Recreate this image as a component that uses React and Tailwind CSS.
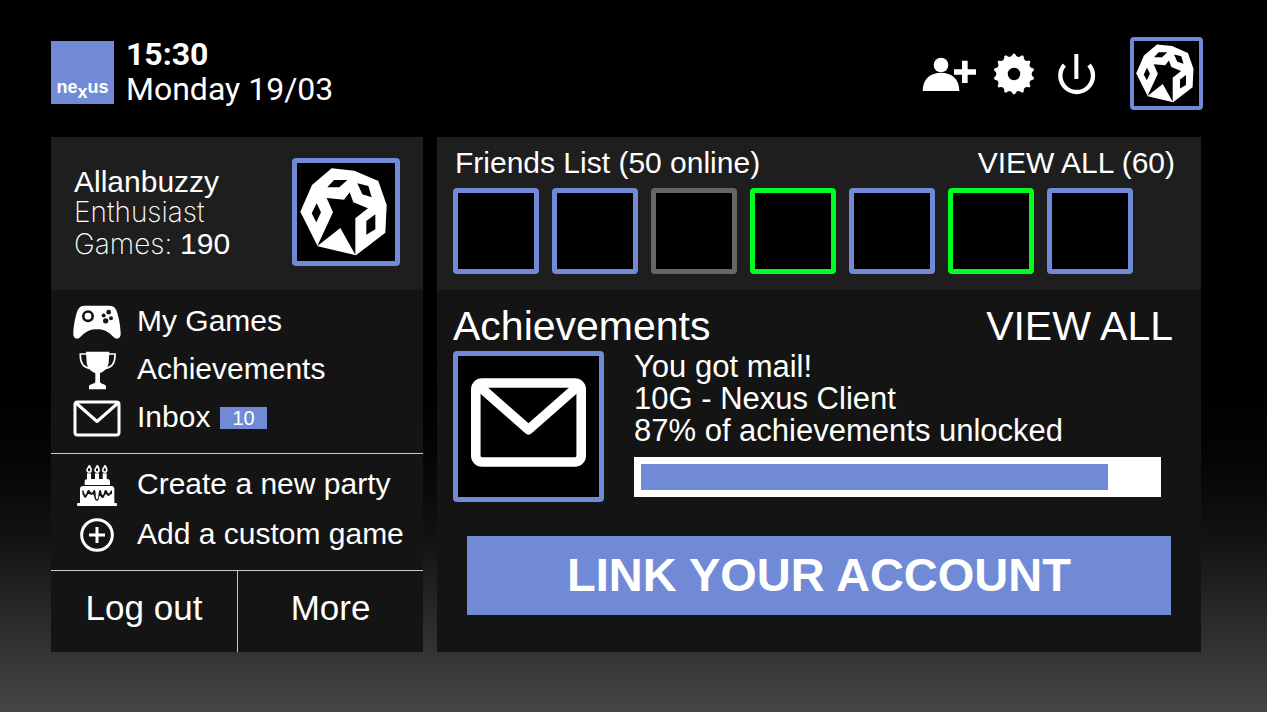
import clsx from "clsx";

const friends = [
  { id: 1, status: "online" },
  { id: 2, status: "online" },
  { id: 3, status: "offline" },
  { id: 4, status: "playing" },
  { id: 5, status: "online" },
  { id: 6, status: "playing" },
  { id: 7, status: "online" },
];

const statusBorder = {
  online: "border-[#718ad6]",
  offline: "border-[#666666]",
  playing: "border-[#00ff21]",
};

const GEAR_TEETH = 14;

function gearPath() {
  const point = (radius, step) => {
    const angle = (step * Math.PI) / GEAR_TEETH - Math.PI / 2;
    const x = 64 + radius * Math.cos(angle);
    const y = 64 + radius * Math.sin(angle);
    return `${x.toFixed(1)} ${y.toFixed(1)}`;
  };
  let d = `M${point(62, -0.2)}`;
  for (let i = 0; i < GEAR_TEETH; i++) {
    d += `L${point(62, i * 2 + 0.2)}Q${point(46, i * 2 + 1)} ${point(62, i * 2 + 1.8)}`;
  }
  return d + "Z";
}

function GemIcon() {
  return (
    <svg viewBox="33 39 294 294" className="block w-full h-full" aria-hidden="true">
      <path
        fill="#fff"
        d="M137 55L205 62L277 93L302 165L298 248L210 316L95 289L43 185L78 105Z"
      />
      <path d="M144 90H184L160 112H124Z" />
      <path d="M214 100L247 108L257 142L229 133Z" />
      <path d="M92 160L105 187L91 217L77 190Z" />
      <path d="M268 193V238L241 254V213Z" />
      <path d="M191 127L202 157L246 175L208 205V314L163 234L94 288L141 187L122 144L174 149Z" />
    </svg>
  );
}

function AddFriendIcon() {
  return (
    <svg viewBox="36 66 165 126" className="w-[55px] h-[42px]" fill="#fff" aria-hidden="true">
      <circle cx="93" cy="102" r="22" />
      <path d="M38 180C38 143 62 125 93 125S148 143 148 180Z" />
      <path d="M156 89H173V115H198V131H173V156H156V131H132V115H156Z" />
    </svg>
  );
}

function GearIcon() {
  return (
    <svg viewBox="0 0 128 128" className="w-[42px] h-[42px]" aria-hidden="true">
      <path fill="#fff" d={gearPath()} />
      <circle cx="64" cy="64" r="19" fill="#000" />
    </svg>
  );
}

function PowerIcon() {
  return (
    <svg viewBox="441 66 117 126" className="w-[39px] h-[42px]" fill="none" stroke="#fff" aria-hidden="true">
      <path strokeWidth="12" d="M499 69V144" />
      <path strokeWidth="13" d="M463 102A49 49 0 1 0 537 102" />
    </svg>
  );
}

function ControllerIcon() {
  return (
    <svg viewBox="40 29 144 104" className="w-12 h-[35px]" aria-hidden="true">
      <path
        fill="#fff"
        d="M76 31H148C159 31 166 35 170 44C177 62 182 88 183 112C184 126 177 131 169 129C158 126 150 101 112 101S66 126 55 129C47 131 40 126 41 112C42 88 47 62 54 44C58 35 65 31 76 31Z"
      />
      <circle cx="85" cy="62" r="14" fill="none" stroke="#141414" strokeWidth="8" />
      <g fill="#141414">
        <circle cx="147" cy="50" r="7" />
        <circle cx="132" cy="60" r="6" />
        <circle cx="154" cy="68" r="6" />
        <circle cx="138" cy="76" r="8" />
      </g>
    </svg>
  );
}

function TrophyIcon() {
  return (
    <svg viewBox="57 168 111 117" className="w-[37px] h-[39px]" aria-hidden="true">
      <path
        fill="#fff"
        d="M78 170H148L146 203C143 220 133 229 120 234V260C122 267 134 267 138 272V283H87V272C91 267 104 267 106 260V234C93 229 83 220 80 203Z"
      />
      <g fill="none" stroke="#fff" strokeWidth="5">
        <path d="M80 177H61C60 202 70 218 90 220" />
        <path d="M146 177H165C166 202 156 218 136 220" />
      </g>
    </svg>
  );
}

function MailIcon({ strokeWidth, className }) {
  return (
    <svg
      viewBox="0 0 48 37"
      className={className}
      fill="none"
      stroke="#fff"
      strokeWidth={strokeWidth}
      strokeLinejoin="round"
      aria-hidden="true"
    >
      <rect x="2" y="2" width="44" height="33" rx="2.6" />
      <path d="M3 3L24 21.5L45 3" />
    </svg>
  );
}

function CakeIcon() {
  return (
    <svg viewBox="51 26 120 126" className="w-10 h-[42px]" fill="#fff" aria-hidden="true">
      {[87, 111, 134].map((x) => (
        <g key={x}>
          <path
            fill="none"
            stroke="#fff"
            strokeWidth="5"
            d={`M${x + 1} 30C${x + 1} 37 ${x - 7} 38 ${x - 6} 45C${x - 5} 52 ${x + 6} 52 ${x + 6} 45C${x + 7} 40 ${x + 3} 36 ${x + 1} 30Z`}
          />
          <rect x={x - 6} y="54" width="12" height="17" />
        </g>
      ))}
      <path d="M82 71H142Q150 71 150 79V89H74V79Q74 71 82 71Z" />
      <path d="M70 92H154Q163 92 163 101V145H60V101Q60 92 70 92Z" />
      <path
        fill="#141414"
        d="M67 105C74 103 71 118 76 118S80 103 86 104S90 112 95 112S99 103 104 104C109 106 105 132 111 132S114 105 120 104S123 119 128 119S131 104 137 104S141 114 146 114S150 103 156 106V117C150 114 151 122 146 122S141 116 137 117S134 128 128 128S123 120 119 122S119 136 111 136S104 124 101 119S96 120 93 119S86 114 83 118S80 127 75 127S71 117 67 117Z"
      />
      <rect x="51" y="143" width="120" height="9" rx="3" />
    </svg>
  );
}

function PlusCircleIcon() {
  return (
    <svg viewBox="60 188 102 102" className="w-[34px] h-[34px]" fill="none" stroke="#fff" strokeWidth="9" aria-hidden="true">
      <circle cx="111" cy="239" r="46" />
      <path d="M87 239H135M111 215V263" />
    </svg>
  );
}

function MenuItem({ icon, label, badge }) {
  return (
    <li>
      <a href="#" className="flex items-center h-12 gap-4">
        <span className="w-12 shrink-0 flex justify-center">{icon}</span>
        <span className="pb-1">{label}</span>
        {badge && (
          <span className="-ml-1.5 px-3 bg-[#718ad6] text-xl leading-[22px]">{badge}</span>
        )}
      </a>
    </li>
  );
}

function Header() {
  return (
    <header className="flex items-start h-[73px]">
      <div className="mt-1 w-[63px] h-[63px] shrink-0 bg-[#718ad6] flex items-end justify-center text-lg leading-6 font-bold">
        <span>
          ne<span className="align-sub">x</span>us
        </span>
      </div>
      <div className="ml-3 font-['Roboto',sans-serif] text-[32px] leading-[35px]">
        <p className="font-bold">15:30</p>
        <p>Monday 19/03</p>
      </div>
      <nav className="ml-auto -mr-0.5 flex items-center">
        <button type="button" aria-label="Add friend">
          <AddFriendIcon />
        </button>
        <button type="button" aria-label="Settings" className="ml-4">
          <GearIcon />
        </button>
        <button type="button" aria-label="Power" className="ml-[22px]">
          <PowerIcon />
        </button>
        <button
          type="button"
          aria-label="Profile"
          className="ml-[34px] w-[73px] h-[73px] bg-black border-4 border-[#718ad6] rounded-sm"
        >
          <GemIcon />
        </button>
      </nav>
    </header>
  );
}

function Sidebar() {
  return (
    <aside className="w-[372px] shrink-0 flex flex-col bg-[#141414]">
      <div className="h-[153px] px-[23px] pt-[21px] flex items-start justify-between bg-[#1e1e1e] leading-[31px]">
        <div className="mt-2">
          <p>Allanbuzzy</p>
          <p className="font-['Inter',sans-serif] font-extralight text-[28px] leading-[31px]">Enthusiast</p>
          <p className="font-['Inter',sans-serif] font-extralight text-[28px] leading-[31px]">
            Games:{" "}
            <span className="font-['Liberation_Sans',Arial,sans-serif] font-normal text-[30px]">190</span>
          </p>
        </div>
        <div className="w-[108px] h-[108px] bg-black border-5 border-[#718ad6] rounded-sm">
          <GemIcon />
        </div>
      </div>
      <ul className="pl-[22px] pt-2 pb-[11px]">
        <MenuItem icon={<ControllerIcon />} label="My Games" />
        <MenuItem icon={<TrophyIcon />} label="Achievements" />
        <MenuItem icon={<MailIcon strokeWidth="3" className="w-12 h-[37px]" />} label="Inbox" badge="10" />
      </ul>
      <ul className="pl-[22px] pt-[7px] pb-[11px] border-t border-[#cccccc] flex flex-col gap-0.5">
        <MenuItem icon={<CakeIcon />} label="Create a new party" />
        <MenuItem icon={<PlusCircleIcon />} label="Add a custom game" />
      </ul>
      <div className="h-[82px] grid grid-cols-2 border-t border-[#cccccc] text-[35px]">
        <button type="button" className="pb-1.5">Log out</button>
        <button type="button" className="pb-1.5 border-l border-[#cccccc]">More</button>
      </div>
    </aside>
  );
}

function FriendsList() {
  return (
    <section className="h-[153px] pl-4 pr-[26px] pt-2 bg-[#1e1e1e]">
      <div className="pl-0.5 flex justify-between leading-9">
        <h2>Friends List (50 online)</h2>
        <a href="#">VIEW ALL (60)</a>
      </div>
      <ul className="mt-[7px] flex gap-[13px]">
        {friends.map((friend) => (
          <li
            key={friend.id}
            className={clsx("w-[86px] h-[86px] bg-black border-5 rounded-sm", statusBorder[friend.status])}
          />
        ))}
      </ul>
    </section>
  );
}

function Achievements() {
  return (
    <section className="pl-4 pr-7 pt-3 pb-[37px]">
      <div className="flex justify-between text-[41px] leading-[49px]">
        <h2>Achievements</h2>
        <a href="#">VIEW ALL</a>
      </div>
      <div className="flex gap-[30px]">
        <div className="w-[151px] h-[151px] shrink-0 pb-2 flex items-center justify-center bg-black border-5 border-[#718ad6] rounded-sm">
          <MailIcon strokeWidth="4" className="w-[115px] h-[89px]" />
        </div>
        <div className="flex-1 mr-3 text-[31px] leading-8">
          <p>You got mail!</p>
          <p>10G - Nexus Client</p>
          <p>87% of achievements unlocked</p>
          <div className="mt-2.5 h-10 p-[7px] bg-white">
            <div className="h-full w-[91%] bg-[#718ad6]" />
          </div>
        </div>
      </div>
      <button
        type="button"
        className="mt-[34px] ml-3.5 w-[calc(100%-16px)] h-[79px] bg-[#718ad6] text-[47px] font-bold"
      >
        LINK YOUR ACCOUNT
      </button>
    </section>
  );
}

export default function App() {
  return (
    <div className="min-h-screen pt-[37px] pl-[51px] pr-[66px] pb-[60px] bg-linear-to-b from-black from-45% via-[#121212] via-75% to-[#464646] text-white font-['Liberation_Sans',Arial,sans-serif] text-[30px]">
      <Header />
      <main className="mt-[27px] flex gap-3.5">
        <Sidebar />
        <div className="flex-1 bg-[#141414]">
          <FriendsList />
          <Achievements />
        </div>
      </main>
    </div>
  );
}
